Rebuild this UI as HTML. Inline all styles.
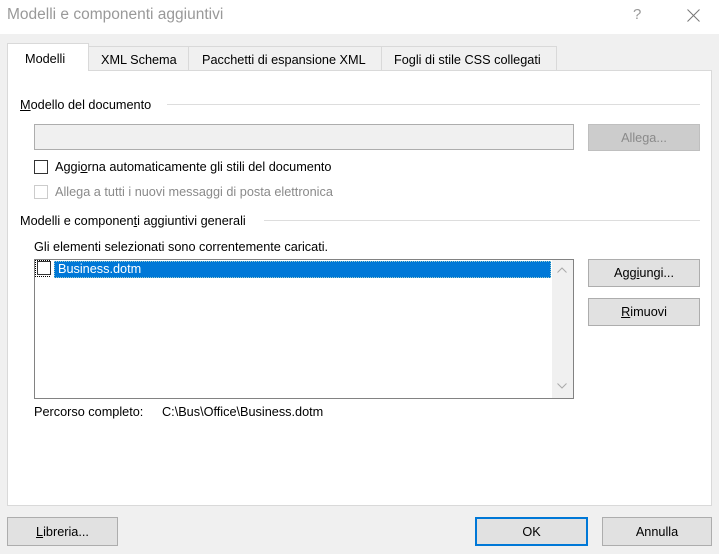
<!DOCTYPE html>
<html><head><meta charset="utf-8"><style>
*{margin:0;padding:0;box-sizing:border-box}
body{width:719px;height:554px;background:#f0f0f0;font-family:"Liberation Sans",sans-serif;font-size:12.7px;color:#000;position:relative;overflow:hidden}
.a{position:absolute;white-space:nowrap}
.t{margin-top:1px}
.btn{position:absolute;background:#e1e1e1;border:1px solid #adadad;text-align:center;line-height:27px}
.cb{position:absolute;width:14px;height:14px;border:1px solid #333;background:#fff}
u{text-decoration:underline}
</style></head><body>
<div class="a" style="left:0;top:0;width:719px;height:34px;background:#fff"></div>
<div class="a" style="left:7px;top:6px;font-size:15.5px;color:#999">Modelli e componenti aggiuntivi</div>
<div class="a" style="left:633px;top:6px;font-size:15px;color:#999">?</div>
<svg class="a" style="left:687px;top:9px" width="13" height="13"><path d="M0.5 0.5L12.5 12.5M12.5 0.5L0.5 12.5" stroke="#777" stroke-width="1"/></svg>

<div class="a" style="left:7px;top:70px;width:705px;height:436px;background:#fff;border:1px solid #d9d9d9"></div>
<div class="a" style="left:88px;top:46px;width:101px;height:25px;border:1px solid #d9d9d9;background:#f0f0f0;padding:6px 0 0 12px">XML Schema</div>
<div class="a" style="left:188px;top:46px;width:194px;height:25px;border:1px solid #d9d9d9;background:#f0f0f0;padding:6px 0 0 13px">Pacchetti di espansione XML</div>
<div class="a" style="left:381px;top:46px;width:176px;height:25px;border:1px solid #d9d9d9;background:#f0f0f0;padding:6px 0 0 12px">Fogli di stile CSS collegati</div>
<div class="a" style="left:7px;top:43px;width:82px;height:28px;border:1px solid #d9d9d9;border-bottom:none;background:#fff;padding:8px 0 0 17px">Modelli</div>

<div class="a" style="left:20px;top:98px"><u>M</u>odello del documento</div>
<div class="a" style="left:167px;top:104px;width:533px;height:1px;background:#ddd"></div>
<div class="a" style="left:34px;top:124px;width:540px;height:26px;background:#f0f0f0;border:1px solid #adadad"></div>
<div class="btn" style="left:588px;top:124px;width:112px;height:27px;background:#ccc;border-color:#bfbfbf;color:#8a8a8a">Allega...</div>

<div class="cb" style="left:34px;top:160px"></div>
<div class="a" style="left:55px;top:160px">Aggi<u>o</u>rna automaticamente gli stili del documento</div>
<div class="cb" style="left:34px;top:185px;border-color:#ccc"></div>
<div class="a" style="left:55px;top:185px;color:#8a8a8a">Allega a tutti i nuovi messaggi di posta elettronica</div>

<div class="a" style="left:20px;top:214px">Modelli e componen<u>t</u>i aggiuntivi generali</div>
<div class="a" style="left:264px;top:220px;width:436px;height:1px;background:#ddd"></div>
<div class="a" style="left:34px;top:240px">Gli elementi selezionati sono correntemente caricati.</div>

<div class="a" style="left:34px;top:259px;width:540px;height:140px;border:1px solid #828282;background:#fff"></div>
<div class="a" style="left:552px;top:260px;width:21px;height:138px;background:#f0f0f0"></div>
<svg class="a" style="left:557px;top:267px" width="10" height="6"><path d="M0.5 5.5L5 1L9.5 5.5" stroke="#aaa" fill="none"/></svg>
<svg class="a" style="left:557px;top:383px" width="10" height="6"><path d="M0.5 0.5L5 5L9.5 0.5" stroke="#aaa" fill="none"/></svg>
<div class="a" style="left:35px;top:260px;width:15px;height:17px;border:1px dotted #000"></div>
<div class="cb" style="left:37px;top:261px;border-color:#333"></div>
<div class="a" style="left:54px;top:261px;width:497px;height:17px;background:#0078d7;border:1px dotted #9cc;color:#fff;padding:0 0 0 3px;line-height:15px">Business.dotm</div>

<div class="btn" style="left:588px;top:259px;width:112px;height:28px">Agg<u>i</u>ungi...</div>
<div class="btn" style="left:588px;top:298px;width:112px;height:28px"><u>R</u>imuovi</div>

<div class="a" style="left:34px;top:405px">Percorso completo:</div>
<div class="a" style="left:162px;top:405px">C:\Bus\Office\Business.dotm</div>

<div class="btn" style="left:7px;top:517px;width:111px;height:29px;line-height:28px"><u>L</u>ibreria...</div>
<div class="btn" style="left:475px;top:517px;width:113px;height:29px;border:2px solid #0078d7;line-height:26px">OK</div>
<div class="btn" style="left:602px;top:517px;width:110px;height:29px;line-height:28px">Annulla</div>
</body></html>
